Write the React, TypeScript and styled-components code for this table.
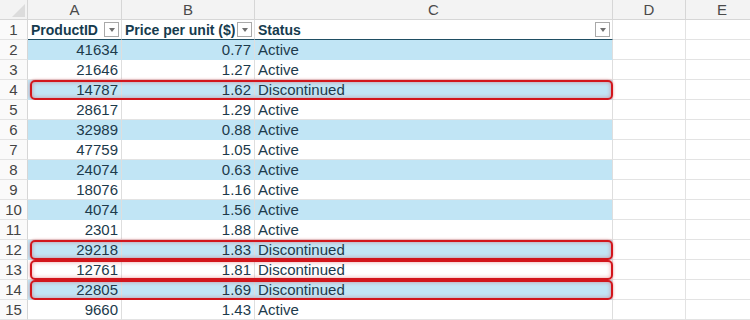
import React from 'react';
import styled, { createGlobalStyle } from 'styled-components';

const GlobalStyle = createGlobalStyle`
    html, body {
        margin: 0;
        padding: 0;
        background: #ffffff;
    }
    * {
        box-sizing: border-box;
    }
`;

const COLS = '28px 94px 133px 358px 73px 73px';

const Sheet = styled.div`
    width: 750px;
    height: 320px;
    overflow: hidden;
    font-family: 'Liberation Sans', Arial, sans-serif;
    font-size: 15px;
    color: #1d3a4b;
`;

const Row = styled.div`
    position: relative;
    display: grid;
    grid-template-columns: ${COLS};
    height: 20px;
`;

const Corner = styled.div`
    position: relative;
    background: #f3f3f3;
    border-right: 1px solid #d6d6d6;
    border-bottom: 1px solid #d6d6d6;

    &::after {
        content: '';
        position: absolute;
        right: 2px;
        bottom: 2px;
        border-left: 13px solid transparent;
        border-bottom: 13px solid #dcdcdc;
    }
`;

const ColLetter = styled.div`
    display: flex;
    align-items: center;
    justify-content: center;
    background: #f3f3f3;
    color: #4a4a4a;
    border-right: 1px solid #d6d6d6;
    border-bottom: 1px solid #d6d6d6;
    line-height: 1;
`;

const RowNum = styled.div`
    display: flex;
    align-items: center;
    justify-content: center;
    background: #fafafa;
    color: #444444;
    border-right: 1px solid #d6d6d6;
    border-bottom: 1px solid #e3e3e3;
`;

const Cell = styled.div<{ $align?: 'left' | 'right'; $band?: boolean; $head?: boolean }>`
    display: flex;
    align-items: center;
    justify-content: ${(p) => (p.$align === 'right' ? 'flex-end' : 'flex-start')};
    gap: 2px;
    padding: 0 ${(p) => (p.$head ? '2px' : '3px')} 0 3px;
    white-space: nowrap;
    overflow: hidden;
    background: ${(p) => (p.$band ? '#c1e5f5' : '#ffffff')};
    border-right: 1px solid #dedede;
    border-bottom: 1px solid ${(p) => (p.$head ? '#1f4e63' : p.$band ? '#c1e5f5' : '#e3e3e3')};
    font-weight: ${(p) => (p.$head ? 700 : 400)};
    font-size: ${(p) => (p.$head ? '14px' : '15px')};
    color: ${(p) => (p.$head ? '#163b4e' : '#1d3a4b')};
`;

const HeadLabel = styled.span`
    flex: 1;
    overflow: hidden;
`;

const Blank = styled.div`
    border-right: 1px solid #e3e3e3;
    border-bottom: 1px solid #e3e3e3;
`;

const FilterButton = styled.span`
    flex: none;
    display: flex;
    align-items: center;
    justify-content: center;
    width: 15px;
    height: 15px;
    border: 1px solid #a9a9a9;
    background: #ffffff;

    &::after {
        content: '';
        margin-top: 1px;
        border-left: 3.5px solid transparent;
        border-right: 3.5px solid transparent;
        border-top: 4px solid #707070;
    }
`;

const Highlight = styled.div`
    position: absolute;
    left: 30px;
    top: 0;
    width: 583px;
    height: 20px;
    border: 2px solid #d2161c;
    border-radius: 5px;
    box-shadow: 0 0 3px rgba(210, 20, 30, 0.5), inset 0 0 4px rgba(210, 20, 30, 0.4);
    pointer-events: none;
`;

type Item = { id: number; price: string; status: string };

const items: Item[] = [
    { id: 41634, price: '0.77', status: 'Active' },
    { id: 21646, price: '1.27', status: 'Active' },
    { id: 14787, price: '1.62', status: 'Discontinued' },
    { id: 28617, price: '1.29', status: 'Active' },
    { id: 32989, price: '0.88', status: 'Active' },
    { id: 47759, price: '1.05', status: 'Active' },
    { id: 24074, price: '0.63', status: 'Active' },
    { id: 18076, price: '1.16', status: 'Active' },
    { id: 4074, price: '1.56', status: 'Active' },
    { id: 2301, price: '1.88', status: 'Active' },
    { id: 29218, price: '1.83', status: 'Discontinued' },
    { id: 12761, price: '1.81', status: 'Discontinued' },
    { id: 22805, price: '1.69', status: 'Discontinued' },
    { id: 9660, price: '1.43', status: 'Active' },
];

const App: React.FC = () => {
    return (
        <>
            <GlobalStyle />
            <Sheet>
                <Row>
                    <Corner />
                    {['A', 'B', 'C', 'D', 'E'].map((c) => (
                        <ColLetter key={c}>{c}</ColLetter>
                    ))}
                </Row>
                <Row>
                    <RowNum>1</RowNum>
                    <Cell $head>
                        <HeadLabel>ProductID</HeadLabel>
                        <FilterButton />
                    </Cell>
                    <Cell $head>
                        <HeadLabel>Price per unit ($)</HeadLabel>
                        <FilterButton />
                    </Cell>
                    <Cell $head>
                        <HeadLabel>Status</HeadLabel>
                        <FilterButton />
                    </Cell>
                    <Blank />
                    <Blank />
                </Row>
                {items.map((item, i) => {
                    const rowNo = i + 2;
                    const band = rowNo % 2 === 0;
                    return (
                        <Row key={rowNo}>
                            <RowNum>{rowNo}</RowNum>
                            <Cell $align="right" $band={band}>
                                {item.id}
                            </Cell>
                            <Cell $align="right" $band={band}>
                                {item.price}
                            </Cell>
                            <Cell $band={band}>{item.status}</Cell>
                            <Blank />
                            <Blank />
                            {item.status === 'Discontinued' && <Highlight />}
                        </Row>
                    );
                })}
            </Sheet>
        </>
    );
};

export default App;
